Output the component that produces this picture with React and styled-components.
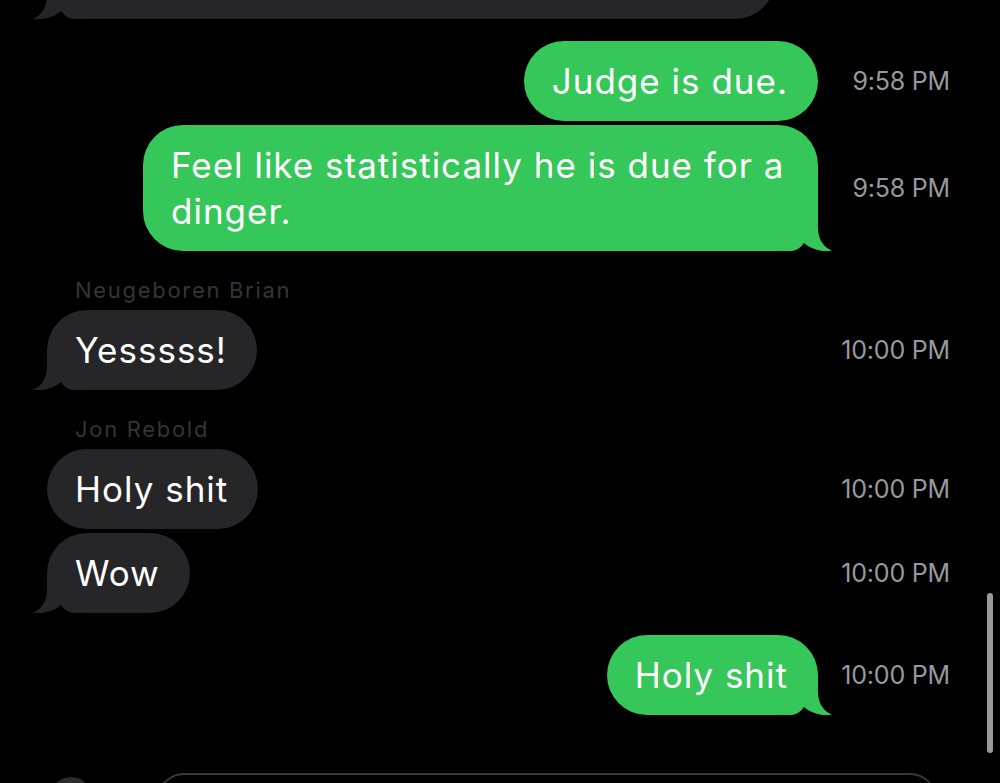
import React from "react";
import styled, { createGlobalStyle } from "styled-components";

const Global = createGlobalStyle`
  html, body { margin: 0; padding: 0; background: #000; }
  * { box-sizing: border-box; }
`;

const GREEN = "#35c759";
const GREY = "#262628";

const Screen = styled.div`
  position: relative;
  width: 1000px;
  height: 783px;
  overflow: hidden;
  background: #000;
  display: flex;
  flex-direction: column;
  font-family: Inter, "Noto Sans", "Liberation Sans", sans-serif;
  -webkit-font-smoothing: antialiased;
`;

const Viewport = styled.div`
  flex: 1;
  min-height: 0;
  display: flex;
  flex-direction: column;
  justify-content: flex-end;
  overflow: hidden;
  padding-bottom: 58px;
`;

const Thread = styled.div`
  flex-shrink: 0;
  display: flex;
  flex-direction: column;
  padding: 0 50px 0 47px;
`;

const Row = styled.div`
  display: grid;
  grid-template-columns: 1fr 132px;
  align-items: center;
  margin-top: ${(p) => p.$gap ?? 0}px;
`;

const BubbleCell = styled.div`
  display: flex;
  justify-content: ${(p) => (p.$sent ? "flex-end" : "flex-start")};
`;

const Bubble = styled.div`
  position: relative;
  max-width: 675px;
  min-height: 80px;
  padding: 17px 30px 17px 28px;
  border-radius: 40px;
  background: ${(p) => (p.$sent ? GREEN : GREY)};
  color: #fff;
  font-size: 35px;
  line-height: 46px;
  letter-spacing: 1px;
`;

const BubbleText = styled.span`
  position: relative;
  z-index: 1;
`;

const TailSvg = styled.svg`
  position: absolute;
  z-index: 0;
  bottom: 0;
  width: 54px;
  height: 40px;
  ${(p) =>
    p.$sent
      ? "right: -16px;"
      : "left: -16px; transform: scaleX(-1);"}
`;

const Time = styled.div`
  justify-self: end;
  white-space: nowrap;
  color: #98989d;
  font-size: 25px;
  letter-spacing: -0.2px;
`;

const SenderName = styled.div`
  margin: 26px 0 7px 28px;
  color: #353537;
  font-size: 22px;
  line-height: 26px;
  letter-spacing: 1.7px;
`;

const Composer = styled.div`
  flex-shrink: 0;
  height: 10px;
  display: flex;
  align-items: flex-start;
  padding-left: 50px;
  gap: 65px;
`;

const PlusButton = styled.div`
  flex-shrink: 0;
  width: 42px;
  height: 42px;
  margin-top: 4px;
  border-radius: 50%;
  background: #2c2c2e;
`;

const InputField = styled.div`
  flex-shrink: 0;
  width: 780px;
  height: 54px;
  border: 2px solid #38383a;
  border-radius: 27px;
`;

const ScrollIndicator = styled.div`
  position: absolute;
  right: 7px;
  top: 593px;
  width: 6px;
  height: 160px;
  border-radius: 3px;
  background: #9a9a9a;
`;

function Tail({ sent, color }) {
  return (
    <TailSvg $sent={sent} viewBox="0 0 54 40" aria-hidden="true">
      <path
        d="M0 0 H38 V17 C38 29 44 36 52 40 C44 41 32 39 24 32 C21 36 17 40 11 40 H0 Z"
        fill={color}
      />
    </TailSvg>
  );
}

function Message({ sent, text, time, tail, gap, width }) {
  return (
    <Row $gap={gap}>
      <BubbleCell $sent={sent}>
        <Bubble
          $sent={sent}
          style={width ? { width, maxWidth: "none" } : undefined}
        >
          <BubbleText>{text}</BubbleText>
          {tail && <Tail sent={sent} color={sent ? GREEN : GREY} />}
        </Bubble>
      </BubbleCell>
      <Time>{time}</Time>
    </Row>
  );
}

export default function App() {
  return (
    <>
      <Global />
      <Screen>
        <Viewport>
          <Thread>
            <Message sent={false} text={"\u00a0"} tail width={728} />
            <Message sent gap={22} text="Judge is due." time="9:58 PM" />
            <Message
              sent
              gap={4}
              text="Feel like statistically he is due for a dinger."
              time="9:58 PM"
              tail
            />
            <SenderName>Neugeboren Brian</SenderName>
            <Message sent={false} text="Yesssss!" time="10:00 PM" tail />
            <SenderName>Jon Rebold</SenderName>
            <Message sent={false} text="Holy shit" time="10:00 PM" />
            <Message sent={false} gap={4} text="Wow" time="10:00 PM" tail />
            <Message sent gap={22} text="Holy shit" time="10:00 PM" tail />
          </Thread>
        </Viewport>
        <Composer>
          <PlusButton />
          <InputField />
        </Composer>
        <ScrollIndicator />
      </Screen>
    </>
  );
}
